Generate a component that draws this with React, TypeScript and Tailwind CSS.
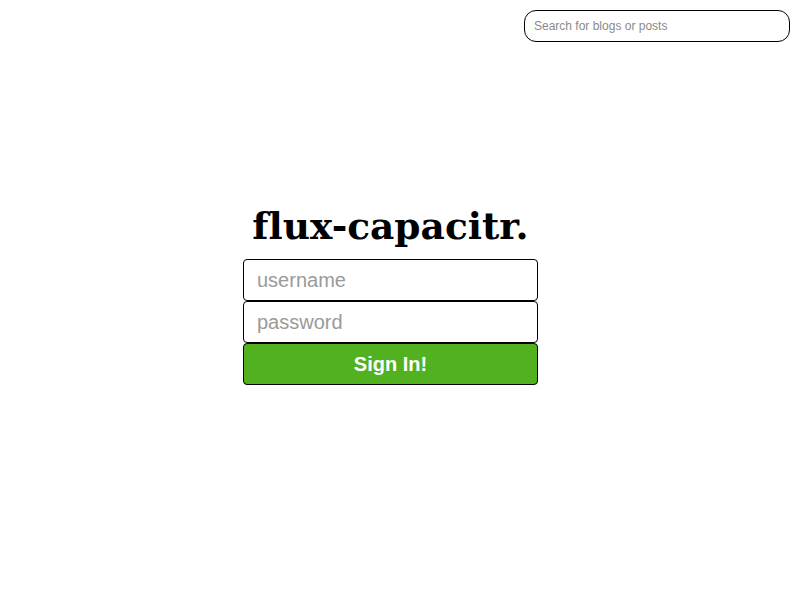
export default function App() {
  return (
    <div className="h-screen w-full bg-white font-['Liberation_Sans',Arial,sans-serif]">
      <div className="flex justify-end pt-[10px] pr-[10px]">
        <input
          type="text"
          placeholder="Search for blogs or posts"
          className="h-[32px] w-[266px] rounded-[12px] border border-black px-[9px] text-[12px] text-black placeholder:text-[#8a8a8a] outline-none"
        />
      </div>
      <div className="flex justify-center pr-[19px] pt-[166px]">
        <div className="flex w-[295px] flex-col items-center">
          <h1 className="mb-[13.5px] font-['DejaVu_Serif',serif] text-[37.5px] font-bold leading-none text-black [font-variant-ligatures:none]">
            flux-capacitr.
          </h1>
          <input
            type="text"
            placeholder="username"
            className="h-[42px] w-full rounded-[4px] border border-black px-[13px] text-[20px] placeholder:text-[#9a9a9a] outline-none"
          />
          <input
            type="password"
            placeholder="password"
            className="h-[42px] w-full rounded-[4px] border border-black px-[13px] text-[20px] placeholder:text-[#9a9a9a] outline-none"
          />
          <button className="h-[42px] w-full rounded-[4px] border border-black bg-[#52b11f] text-[20px] font-bold text-white">
            Sign In!
          </button>
        </div>
      </div>
    </div>
  );
}
